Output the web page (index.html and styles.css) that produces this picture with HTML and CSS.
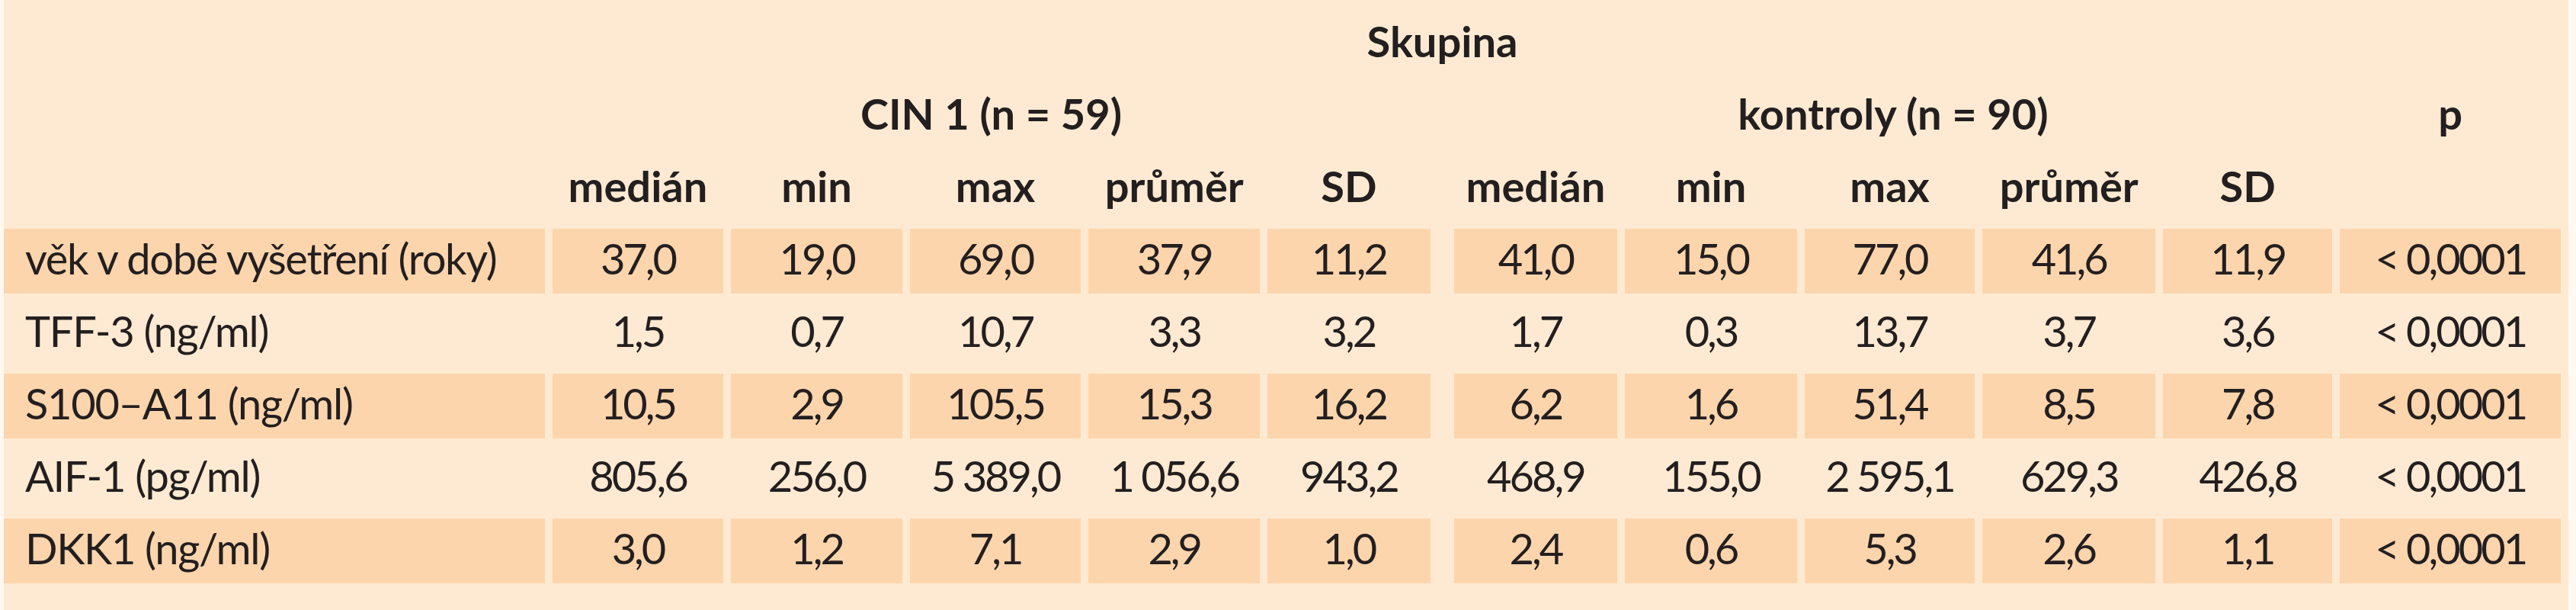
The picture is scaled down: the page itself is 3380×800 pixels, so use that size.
FILE: index.html
```html
<!DOCTYPE html>
<html lang="cs">
<head>
<meta charset="utf-8">
<title>Skupina</title>
<link rel="stylesheet" href="styles.css">
</head>
<body>
<div class="sheet">
<table class="t">
<colgroup>
<col class="c-label">
<col class="c-n"><col class="c-n"><col class="c-n"><col class="c-n"><col class="c-sd1">
<col class="c-sp">
<col class="c-med2"><col class="c-min2"><col class="c-max2"><col class="c-avg2"><col class="c-sd2">
<col class="c-p">
</colgroup>
<thead>
<tr><th></th><th colspan="11">Skupina</th><th></th></tr>
<tr><th></th><th colspan="5">CIN 1 (n = 59)</th><th></th><th colspan="5">kontroly (n = 90)</th><th>p</th></tr>
<tr><th></th><th>medián</th><th>min</th><th>max</th><th>průměr</th><th>SD</th><th></th><th>medián</th><th>min</th><th>max</th><th>průměr</th><th>SD</th><th></th></tr>
</thead>
<tbody>
<tr class="sh"><td class="lbl">věk v době vyšetření (roky)</td><td>37,0</td><td>19,0</td><td>69,0</td><td>37,9</td><td>11,2</td><td class="sp"></td><td>41,0</td><td>15,0</td><td>77,0</td><td>41,6</td><td>11,9</td><td>&lt; 0,0001</td></tr>
<tr><td class="lbl">TFF-3 (ng/ml)</td><td>1,5</td><td>0,7</td><td>10,7</td><td>3,3</td><td>3,2</td><td class="sp"></td><td>1,7</td><td>0,3</td><td>13,7</td><td>3,7</td><td>3,6</td><td>&lt; 0,0001</td></tr>
<tr class="sh"><td class="lbl">S100–A11 (ng/ml)</td><td>10,5</td><td>2,9</td><td>105,5</td><td>15,3</td><td>16,2</td><td class="sp"></td><td>6,2</td><td>1,6</td><td>51,4</td><td>8,5</td><td>7,8</td><td>&lt; 0,0001</td></tr>
<tr><td class="lbl">AIF-1 (pg/ml)</td><td>805,6</td><td>256,0</td><td>5 389,0</td><td>1 056,6</td><td>943,2</td><td class="sp"></td><td>468,9</td><td>155,0</td><td>2 595,1</td><td>629,3</td><td>426,8</td><td>&lt; 0,0001</td></tr>
<tr class="sh"><td class="lbl">DKK1 (ng/ml)</td><td>3,0</td><td>1,2</td><td>7,1</td><td>2,9</td><td>1,0</td><td class="sp"></td><td>2,4</td><td>0,6</td><td>5,3</td><td>2,6</td><td>1,1</td><td>&lt; 0,0001</td></tr>
</tbody>
</table>
</div>
</body>
</html>
```
FILE: styles.css
```css
html, body {
  margin: 0;
  padding: 0;
  background: #fff8f0;
}
.sheet {
  margin-left: 5px;
  width: 3365px;
  height: 800px;
  box-sizing: border-box;
  padding-top: 5px;
  background: #feead2;
  overflow: hidden;
}
.t {
  margin-left: -10px;
  border-collapse: separate;
  border-spacing: 10px;
  table-layout: fixed;
  font-family: Lato, "Liberation Sans", sans-serif;
  font-size: 56px;
  color: #231f20;
}
.c-label { width: 710px; }
.c-n { width: 225px; }
.c-sd1 { width: 214px; }
.c-sp { width: 11px; }
.c-med2 { width: 215px; }
.c-min2 { width: 226px; }
.c-max2 { width: 224px; }
.c-avg2 { width: 227px; }
.c-sd2 { width: 223px; }
.c-p { width: 290px; }
.t th, .t td {
  height: 85px;
  box-sizing: border-box;
  padding: 0 0 8px 0;
  line-height: 77px;
  text-align: center;
  vertical-align: middle;
  white-space: nowrap;
  overflow: visible;
}
.t th {
  font-weight: 700;
}
.t td {
  font-weight: 400;
  letter-spacing: -3px;
}
.t td.lbl {
  text-align: left;
  padding-left: 28px;
  letter-spacing: -1.3px;
}
.sh td {
  background: #fdd5ad;
}
.sh td.sp {
  background: transparent;
}
```
